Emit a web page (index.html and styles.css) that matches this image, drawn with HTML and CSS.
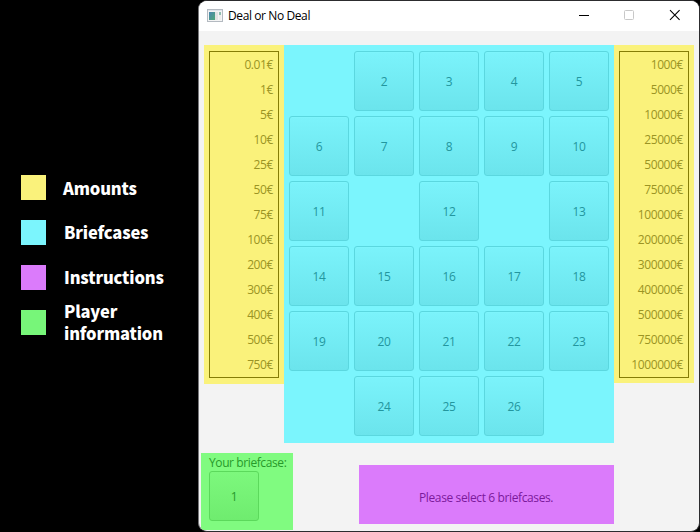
FILE: index.html
```html
<!DOCTYPE html>
<html lang="en">
<head>
<meta charset="utf-8">
<title>Deal or No Deal</title>
<link rel="stylesheet" href="styles.css">
</head>
<body>
<aside class="legend">
  <div class="legend-item"><i class="swatch yellow"></i><span class="amounts-label">Amounts</span></div>
  <div class="legend-item"><i class="swatch cyan"></i><span class="cases-label">Briefcases</span></div>
  <div class="legend-item"><i class="swatch purple"></i><span class="instructions-label">Instructions</span></div>
  <div class="legend-item"><i class="swatch green"></i><span class="player-label">Player<br>information</span></div>
</aside>
<main class="window">
  <header class="titlebar">
    <svg class="app-icon" width="16" height="14" viewBox="0 0 16 14">
      <defs><linearGradient id="pic" x1="0" y1="0" x2="1" y2="1"><stop offset="0" stop-color="#4c86b0"/><stop offset="1" stop-color="#4fa878"/></linearGradient></defs>
      <path fill="#b4bac1" d="M0 0h16v13H0z"/><path fill="#dfe4ea" d="M1 1h14v1H1z"/><path fill="#f4f4f4" d="M1 2h14v10H1z"/>
      <path fill="url(#pic)" d="M2 3h6v8H2z"/><path fill="#e2e2e2" d="M8 3h3v8H8z"/><path fill="#ececec" d="M12 3h2v8h-2z"/><path fill="#8fbfb0" d="M12 3h2v3h-2z"/>
    </svg>
    <h1>Deal or No Deal</h1>
    <svg class="controls" width="102" height="12" viewBox="0 0 102 12" fill="none">
      <path stroke="#000" d="M0 6.5h10"/>
      <rect x="45.500" y="1.500" width="9" height="9" rx="1" stroke="#c8c8c8"/>
      <path stroke="#000" stroke-width="1.1" d="M91 1.200l9.600 9.600M100.600 1.200L91 10.800"/>
    </svg>
  </header>
  <section class="board">
    <div class="amounts low"><ul>
      <li>0.01€</li><li>1€</li><li>5€</li><li>10€</li><li>25€</li><li>50€</li><li>75€</li><li>100€</li><li>200€</li><li>300€</li><li>400€</li><li>500€</li><li>750€</li>
    </ul></div>
    <div class="cases">
      <span></span><button>2</button><button>3</button><button>4</button><button>5</button>
      <button>6</button><button>7</button><button>8</button><button>9</button><button>10</button>
      <button>11</button><span></span><button>12</button><span></span><button>13</button>
      <button>14</button><button>15</button><button>16</button><button>17</button><button>18</button>
      <button>19</button><button>20</button><button>21</button><button>22</button><button>23</button>
      <span></span><button>24</button><button>25</button><button>26</button><span></span>
    </div>
    <div class="amounts high"><ul>
      <li>1000€</li><li>5000€</li><li>10000€</li><li>25000€</li><li>50000€</li><li>75000€</li><li>100000€</li><li>200000€</li><li>300000€</li><li>400000€</li><li>500000€</li><li>750000€</li><li>1000000€</li>
    </ul></div>
  </section>
  <footer class="bottom">
    <div class="player"><span>Your briefcase:</span><button>1</button></div>
    <div class="instructions"><span>Please select 6 briefcases.</span></div>
  </footer>
</main>
</body>
</html>
```

FILE: styles.css
```css
* { box-sizing: border-box; }
body {
  margin: 0;
  width: 700px;
  height: 532px;
  overflow: hidden;
  display: flex;
  background: #000;
  font: 12px/16px "Open Sans", "Noto Sans", sans-serif;
}
.legend {
  width: 198px;
  padding: 175px 0 0 21px;
  display: flex;
  flex-direction: column;
  gap: 20px;
  color: #fff;
  font: 900 16.5px/22px "Noto Sans CJK SC", sans-serif;
  letter-spacing: -0.15px;
}
.legend-item { display: flex; align-items: center; gap: 18px; height: 25px; white-space: nowrap; }
.legend-item span { padding-bottom: 2px; }
.swatch { flex: none; width: 25px; height: 25px; }
.yellow, .amounts { background: #faf27b; }
.cyan, .cases { background: #7bf5fd; }
.purple, .instructions { background: #db7bfb; }
.green { background: #77f679; }
.legend-item .amounts-label { margin-left: -1px; padding-bottom: 0; }

.window {
  width: 502px;
  height: 532px;
  border: 1px solid #2c2c2e;
  border-left-color: #77777a;
  border-radius: 9px;
  background: #f3f3f3;
  overflow: hidden;
}
.titlebar {
  height: 30px;
  display: flex;
  align-items: center;
  padding: 0 18px 0 8px;
  background: #fff;
}
.app-icon { margin-bottom: 1px; }
.titlebar h1 {
  flex: 1;
  margin: 0 0 0 5px;
  font-size: 12px;
  font-weight: 400;
  letter-spacing: -0.4px;
}
.controls { margin-bottom: 2px; }
.board { display: flex; align-items: flex-start; height: 408px; padding: 14px 5px 0; }
.amounts { width: 80px; height: 338px; padding: 6px 5px 5px; }
.amounts.low { height: 339px; }
.amounts ul {
  height: 327px;
  margin: 0;
  padding: 0 5px 0 0;
  border: 1px solid #857d06;
  list-style: none;
  color: #9b9424;
  text-align: right;
}
.amounts li { height: 25px; line-height: 25px; letter-spacing: -0.4px; }
.cases {
  width: 330px;
  height: 398px;
  padding: 6px 5px;
  display: grid;
  grid-template-columns: repeat(5, 60px);
  grid-auto-rows: 60px;
  gap: 5px;
}
button {
  padding: 2px 0 0;
  border: 1px solid #5bd7df;
  border-radius: 3px;
  background: linear-gradient(#7bf3fb, #6be4ec);
  box-shadow: inset 0 1px #7df5fc;
  color: #23969e;
  font: inherit;
  letter-spacing: -0.3px;
}
.bottom { display: flex; align-items: flex-start; padding: 14px 0 0 2px; }
.player {
  width: 92px;
  height: 77px;
  padding: 2px 0 0 8px;
  background: #80fb80;
  color: #27992a;
  letter-spacing: -0.4px;
  white-space: nowrap;
}
.player span { display: block; }
.player button {
  width: 50px;
  height: 50px;
  border-color: #5cd95c;
  background: linear-gradient(#7df87d, #6fec6f);
  box-shadow: none;
  color: #27992a;
}
.instructions {
  width: 255px;
  height: 59px;
  margin: 12px 0 0 66px;
  padding: 25px 0 0 60px;
  color: #7c1a9b;
  letter-spacing: -0.38px;
  white-space: nowrap;
}
```
